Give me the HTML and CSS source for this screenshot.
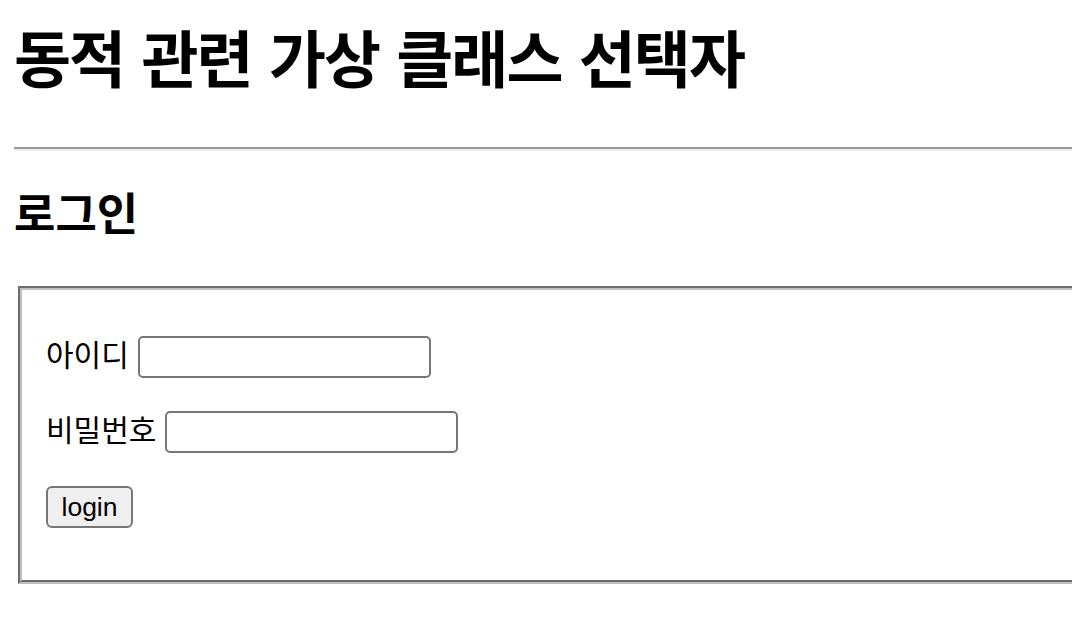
FILE: index.html
```html
<!DOCTYPE html>
<html lang="ko">
<head>
<meta charset="utf-8">
<title>동적 관련 가상 클래스 선택자</title>
<link rel="stylesheet" href="styles.css">
</head>
<body>
  <h1 class="title">동적 관련 가상 클래스 선택자</h1>
  <hr class="rule">
  <h2 class="subtitle">로그인</h2>
  <form class="login">
    <fieldset class="box">
      <div class="rows">
        <p class="row"><label class="lbl" for="uid">아이디</label><input class="field" type="text" id="uid"></p>
        <p class="row"><label class="lbl" for="upw">비밀번호</label><input class="field" type="password" id="upw"></p>
        <p class="row"><button class="btn" type="button">login</button></p>
      </div>
    </fieldset>
  </form>
</body>
</html>
```
FILE: styles.css
```css
html {
  overflow: hidden;
  background: #fff;
}
body {
  margin: 0;
  padding: 0 0 0 14px;
  width: 1120px;
  color: #000;
  font-family: "Noto Sans CJK KR", "Noto Sans", sans-serif;
}
.title {
  margin: 24px 0 0 0;
  font-size: 62px;
  line-height: 64px;
  font-weight: 700;
  letter-spacing: -2px;
  word-spacing: 2px;
  white-space: nowrap;
}
.rule {
  margin: 59px 0 0 0;
  height: 0;
  border: 0;
  border-top: 2px solid #9a9a9a;
  border-bottom: 2px solid #eeeeee;
}
.subtitle {
  margin: 37px 0 0 0;
  font-size: 45px;
  line-height: 48px;
  font-weight: 700;
}
.login {
  margin: 50px 0 0 0;
}
.box {
  margin: 0 0 0 4px;
  padding: 46px 24px 52px 24px;
  border: 4px groove #c0c0c0;
  min-width: 0;
}
.rows {
  display: flex;
  flex-direction: column;
  gap: 33px;
}
.row {
  margin: 0;
  height: 42px;
  display: flex;
  align-items: center;
  gap: 9px;
}
.lbl {
  font-size: 30px;
  line-height: 32px;
  margin-bottom: 8px;
}
.field {
  box-sizing: border-box;
  width: 293px;
  height: 42px;
  margin: 0;
  border: 2px solid #767676;
  border-radius: 5px;
  background: #fff;
  padding: 0 6px;
}
.btn {
  box-sizing: border-box;
  width: 87px;
  height: 42px;
  margin: 0;
  padding: 0;
  border: 2px solid #767676;
  border-radius: 6px;
  background: #efefef;
  color: #000;
  font-family: "Liberation Sans", Arial, sans-serif;
  font-size: 26.5px;
  line-height: 1;
}
```
